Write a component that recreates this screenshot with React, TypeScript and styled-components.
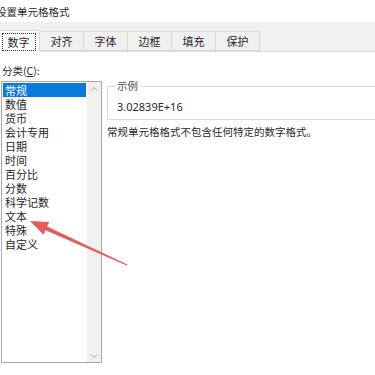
import React from "react";
import styled, { createGlobalStyle } from "styled-components";

const GlobalStyle = createGlobalStyle`
  body {
    margin: 0;
    background: #ffffff;
    font-family: "Noto Sans CJK SC", "Noto Sans", sans-serif;
    color: #1e1e1e;
  }
`;

const Page = styled.div`
  position: relative;
  width: 375px;
  height: 375px;
  overflow: hidden;
  background: #ffffff;
`;

const TitleBar = styled.div`
  height: 22px;
  display: flex;
  align-items: center;
  font-size: 10.5px;
  color: #2a2a2a;

  span {
    margin-left: -4px;
  }
`;

const TabStrip = styled.div`
  height: 30px;
  display: flex;
  align-items: flex-end;
  background: #f0f0f0;
  border-bottom: 1px solid #dadada;
  box-sizing: border-box;
`;

const Tab = styled.div<{ $active?: boolean }>`
  box-sizing: border-box;
  flex-shrink: 0;
  width: ${(p) => (p.$active ? "43px" : "45px")};
  height: ${(p) => (p.$active ? "22px" : "20px")};
  margin-bottom: ${(p) => (p.$active ? "-1px" : "0")};
  margin-left: ${(p) => (p.$active ? "-3px" : "-1px")};
  display: flex;
  align-items: center;
  justify-content: center;
  background: ${(p) => (p.$active ? "#ffffff" : "#f0f0f0")};
  border: 1px solid #dadada;
  border-bottom: ${(p) => (p.$active ? "none" : "1px solid #dadada")};
  font-size: 11px;
  color: #2a2a2a;
  position: relative;
  z-index: ${(p) => (p.$active ? 1 : 0)};
`;

const FocusLabel = styled.span`
  border: 1px dotted #333333;
  padding: 1px 5px 1px 5px;
  line-height: 14px;
`;

const Content = styled.div`
  display: flex;
  padding-top: 10px;
`;

const LeftColumn = styled.div`
  width: 101px;
  flex-shrink: 0;
  margin-left: 1px;
  display: flex;
  flex-direction: column;
`;

const Label = styled.div`
  height: 18px;
  line-height: 18px;
  font-size: 10.5px;
  padding-left: 1px;
  color: #2a2a2a;

  u {
    text-decoration: underline;
  }
`;

const ListBox = styled.div`
  margin-top: 1px;
  height: 282px;
  box-sizing: border-box;
  border: 1px solid #a9a9a9;
  display: flex;
`;

const Items = styled.div`
  flex: 1;
  padding: 1px 1px 0 1px;
`;

const Item = styled.div<{ $selected?: boolean }>`
  height: 14px;
  line-height: 14px;
  font-size: 11px;
  padding-left: 2px;
  white-space: nowrap;
  background: ${(p) => (p.$selected ? "#0a7ad8" : "transparent")};
  color: ${(p) => (p.$selected ? "#ffffff" : "#1e1e1e")};
`;

const Scrollbar = styled.div`
  width: 14px;
  background: #f0f0f0;
  display: flex;
  flex-direction: column;
  justify-content: space-between;
  align-items: center;
  padding: 4px 0 3px;
`;

const RightColumn = styled.div`
  width: 300px;
  flex-shrink: 0;
  margin-left: 5px;
  padding-top: 17px;
`;

const SampleBox = styled.fieldset`
  margin: 0;
  padding: 0 9px 5px;
  min-width: 0;
  border: 1px solid #dcdcdc;
  height: 41px;
  box-sizing: border-box;
`;

const Legend = styled.legend`
  padding: 0 1px;
  margin-left: -1px;
  font-size: 10.5px;
  line-height: 14px;
  color: #4a4a4a;
`;

const SampleValue = styled.div`
  margin-top: 7px;
  font-family: "Noto Sans", "Open Sans", sans-serif;
  font-size: 11px;
  line-height: 14px;
  color: #2a2a2a;
`;

const Description = styled.div`
  margin-top: 5px;
  font-size: 10.5px;
  line-height: 14px;
  color: #2a2a2a;
  white-space: nowrap;
`;

const ArrowOverlay = styled.svg`
  position: absolute;
  left: 0;
  top: 0;
  pointer-events: none;
`;

const Chevron = ({ up }: { up?: boolean }) => (
  <svg width="8" height="5" viewBox="0 0 8 5">
    <polyline
      points={up ? "1,4.5 4,1.5 7,4.5" : "1,0.5 4,3.5 7,0.5"}
      fill="none"
      stroke="#a6a6a6"
      strokeWidth="1"
    />
  </svg>
);

const tabs = ["数字", "对齐", "字体", "边框", "填充", "保护"];
const categories = [
  "常规",
  "数值",
  "货币",
  "会计专用",
  "日期",
  "时间",
  "百分比",
  "分数",
  "科学记数",
  "文本",
  "特殊",
  "自定义",
];

function App() {
  return (
    <Page>
      <GlobalStyle />
      <TitleBar>
        <span>设置单元格格式</span>
      </TitleBar>
      <TabStrip>
        {tabs.map((t, i) =>
          i === 0 ? (
            <Tab key={t} $active>
              <FocusLabel>{t}</FocusLabel>
            </Tab>
          ) : (
            <Tab key={t}>{t}</Tab>
          )
        )}
      </TabStrip>
      <Content>
        <LeftColumn>
          <Label>
            分类(<u>C</u>):
          </Label>
          <ListBox>
            <Items>
              {categories.map((c, i) => (
                <Item key={c} $selected={i === 0}>
                  {c}
                </Item>
              ))}
            </Items>
            <Scrollbar>
              <Chevron up />
              <Chevron />
            </Scrollbar>
          </ListBox>
        </LeftColumn>
        <RightColumn>
          <SampleBox>
            <Legend>示例</Legend>
            <SampleValue>3.02839E+16</SampleValue>
          </SampleBox>
          <Description>常规单元格格式不包含任何特定的数字格式。</Description>
        </RightColumn>
      </Content>
      <ArrowOverlay width="375" height="375" viewBox="0 0 375 375">
        <polygon
          points="30,221 49.3,222 47.2,226.6 127.3,264.4 126.7,265.6 45.6,230.2 43.5,234.8"
          fill="#e65c5c"
        />
      </ArrowOverlay>
    </Page>
  );
}

export default App;
